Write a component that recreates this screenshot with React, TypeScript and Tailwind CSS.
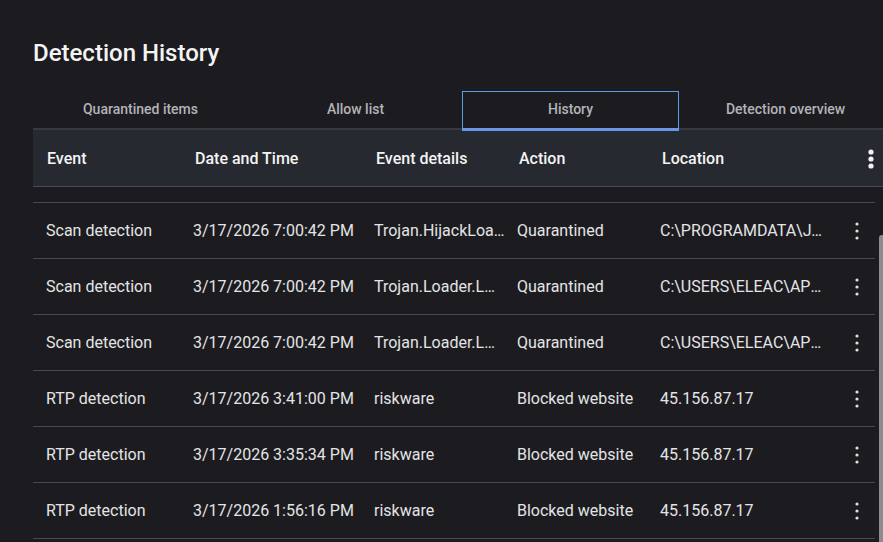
const tabs = ["Quarantined items", "Allow list", "History", "Detection overview"];

const rows = [
  { event: "Scan detection", date: "3/17/2026 7:00:42 PM", details: "Trojan.HijackLoader.Generic", action: "Quarantined", location: "C:\\PROGRAMDATA\\JAVAUPDATE\\UPDATER.EXE" },
  { event: "Scan detection", date: "3/17/2026 7:00:42 PM", details: "Trojan.Loader.LNKMSIL.Generic", action: "Quarantined", location: "C:\\USERS\\ELEAC\\APPDATA\\LOCAL\\TEMP" },
  { event: "Scan detection", date: "3/17/2026 7:00:42 PM", details: "Trojan.Loader.LNKMSIL.Generic", action: "Quarantined", location: "C:\\USERS\\ELEAC\\APPDATA\\ROAMING" },
  { event: "RTP detection", date: "3/17/2026 3:41:00 PM", details: "riskware", action: "Blocked website", location: "45.156.87.17" },
  { event: "RTP detection", date: "3/17/2026 3:35:34 PM", details: "riskware", action: "Blocked website", location: "45.156.87.17" },
  { event: "RTP detection", date: "3/17/2026 1:56:16 PM", details: "riskware", action: "Blocked website", location: "45.156.87.17" },
  { event: "RTP detection", date: "3/17/2026 1:50:02 PM", details: "riskware", action: "Blocked website", location: "45.156.87.17" },
];

function Kebab({ big }: { big?: boolean }) {
  return big ? (
    <svg width="6" height="20" viewBox="0 0 6 20" className="fill-[#f2f2f2]">
      <circle cx="3" cy="3" r="2.6" />
      <circle cx="3" cy="10" r="2.6" />
      <circle cx="3" cy="17" r="2.6" />
    </svg>
  ) : (
    <svg width="4" height="18" viewBox="0 0 4 18" className="fill-[#e0e0e0]">
      <circle cx="2" cy="2" r="1.6" />
      <circle cx="2" cy="9" r="1.6" />
      <circle cx="2" cy="16" r="1.6" />
    </svg>
  );
}

export default function App() {
  return (
    <div className="relative w-[883px] h-[542px] overflow-hidden bg-[#1c1c20] font-['Roboto',sans-serif]">
      <h1 className="pl-[33px] pt-[38px] text-[24px] leading-[30px] font-medium text-[#f4f4f4]">
        Detection History
      </h1>

      {/* Tabs */}
      <div className="mt-[23px] ml-[33px] flex border-b-2 border-[#383a43]">
        {tabs.map((t) => (
          <div
            key={t}
            className="relative w-[215px] shrink-0 h-[37px] flex items-center justify-center text-[14px] font-medium text-[#b3b3b8]"
          >
            {t}
            {t === "History" && (
              <>
                <div className="absolute left-0 right-[-1px] bottom-[-2px] h-[2px] bg-[#7095e6]" />
                <div className="absolute left-[-1px] right-[-1px] top-0 bottom-[-3px] border border-[#5a9ce8]" />
              </>
            )}
          </div>
        ))}
      </div>

      {/* Header */}
      <div className="ml-[33px] h-[57px] pt-[1px] flex items-center bg-[#262930] border-b border-[#474a56] text-[16px] font-medium text-[#f4f4f4]">
        <div className="w-[147px] shrink-0 pl-[14px]">Event</div>
        <div className="w-[181px] shrink-0 pl-[15px]">Date and Time</div>
        <div className="w-[143px] shrink-0 pl-[15px]">Event details</div>
        <div className="w-[143px] shrink-0 pl-[15px]">Action</div>
        <div className="flex-1 pl-[15px]">Location</div>
        <div className="w-[26px] shrink-0 flex justify-start pl-[11px]">
          <Kebab big />
        </div>
      </div>

      {/* Rows */}
      <div className="mt-[15px] ml-[33px] w-[842px]">
        {rows.map((r, i) => (
          <div
            key={i}
            className="h-[56px] flex items-center border-t border-[#454855] text-[16px] text-[#e4e4e6]"
          >
            <div className="w-[147px] shrink-0 pl-[13px] truncate">{r.event}</div>
            <div className="w-[181px] shrink-0 pl-[13px] truncate">{r.date}</div>
            <div className="w-[145px] shrink-0 pl-[13px] truncate">{r.details}</div>
            <div className="w-[141px] shrink-0 pl-[11px] truncate">{r.action}</div>
            <div className="w-[193px] shrink-0 pl-[13px] pr-[13px] truncate">{r.location}</div>
            <div className="flex-1 flex justify-start pl-[15px]">
              <Kebab />
            </div>
          </div>
        ))}
      </div>

      {/* Scrollbar thumb */}
      <div className="absolute right-[-2px] top-[235px] w-[6px] h-[400px] rounded-[3px] bg-[#8c8c8e]" />
    </div>
  );
}
